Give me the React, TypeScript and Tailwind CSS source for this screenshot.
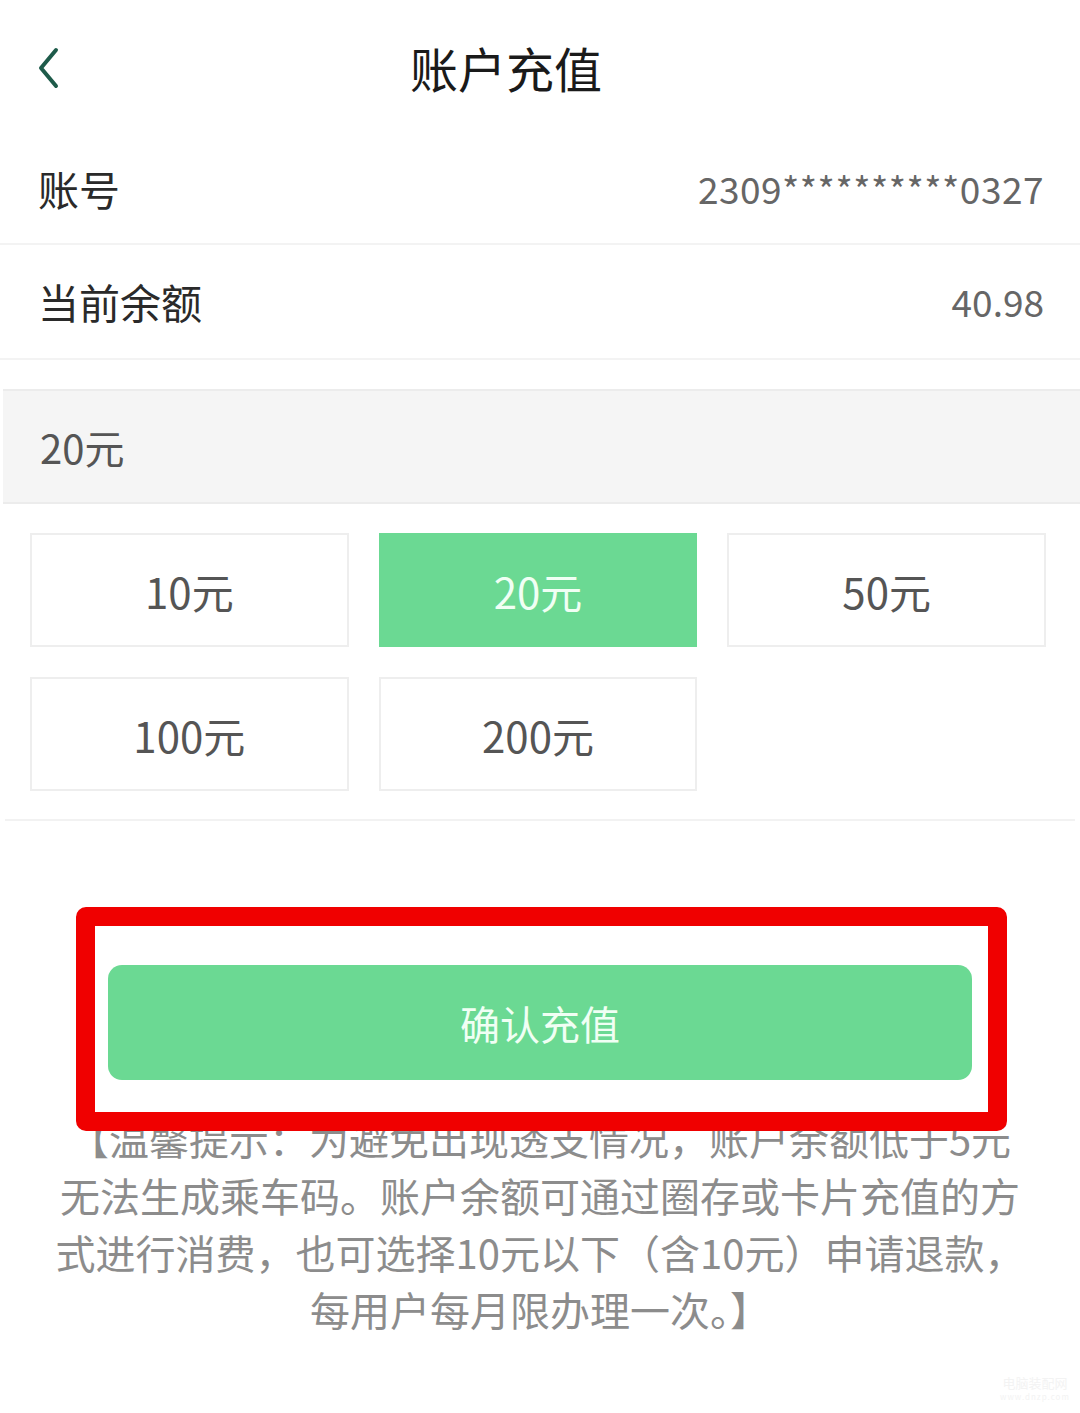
const amounts = ["10元", "20元", "50元", "100元", "200元"];

const tipLines = [
  "【温馨提示：为避免出现透支情况，账户余额低于5元",
  "无法生成乘车码。账户余额可通过圈存或卡片充值的方",
  "式进行消费，也可选择10元以下（含10元）申请退款，",
  "每用户每月限办理一次。】",
];

export default function App() {
  const selected = "20元";

  return (
    <div
      className="relative min-h-[1413px] w-[1080px] bg-white"
      style={{ fontFamily: '"Noto Sans CJK SC", "Noto Sans", sans-serif' }}
    >
      {/* header */}
      <div className="relative flex h-[134px] items-center justify-center pr-[68px]">
        <svg
          className="absolute left-[34px] top-[46px]"
          width="28"
          height="44"
          viewBox="0 0 28 44"
          fill="none"
        >
          <path d="M22 4 L7 22 L22 40" stroke="#1e5b4a" strokeWidth="4" strokeLinecap="round" strokeLinejoin="round" />
        </svg>
        <h1 className="text-[48px] font-normal leading-none text-[#1a1a1a]">账户充值</h1>
      </div>

      {/* account rows */}
      <div className="flex h-[111px] items-center justify-between border-b-2 border-[#f3f3f3] pl-[38px] pr-[36px]">
        <span className="text-[41px] text-[#2a2a2a]">账号</span>
        <span className="text-[37px] tracking-[0.5px] text-[#666666]">2309**********0327</span>
      </div>
      <div className="flex h-[115px] items-center justify-between border-b-2 border-[#f3f3f3] pl-[38px] pr-[36px]">
        <span className="text-[41px] text-[#2a2a2a]">当前余额</span>
        <span className="text-[37px] text-[#666666]">40.98</span>
      </div>

      {/* amount input */}
      <div className="mt-[29px] ml-[3px] flex h-[115px] items-center border-y-2 border-[#ececec] bg-[#f5f5f5] px-[37px]">
        <span className="text-[40px] text-[#555555]">20元</span>
      </div>

      {/* amount grid */}
      <div className="mx-[5px] border-b-2 border-[#f2f2f2] px-[25px] pt-[29px] pb-[28px]">
        <div className="grid grid-cols-3 gap-[30px] pr-[4px]">
          {amounts.map((a) => (
            <div
              key={a}
              className={
                a === selected
                  ? "flex h-[114px] items-center justify-center bg-[#6bd993] text-[42px] text-[#f0fff4]"
                  : "flex h-[114px] items-center justify-center border-2 border-[#eeeeee] bg-white text-[42px] text-[#555555]"
              }
            >
              {a}
            </div>
          ))}
        </div>
      </div>

      {/* confirm */}
      <div className="px-[108px] pt-[144px]">
        <button className="flex h-[115px] w-full items-center justify-center rounded-[14px] bg-[#6bd993] text-[40px] text-[#f0fff4]">
          确认充值
        </button>
      </div>

      <div className="mt-[30px] flex flex-col items-center text-[40px] leading-[57px] text-[#8c8c8c]">
        {tipLines.map((l) => (
          <span key={l} className="whitespace-nowrap">
            {l}
          </span>
        ))}
      </div>

      {/* red annotation box */}
      <div className="absolute left-[76px] top-[907px] h-[224px] w-[931px] rounded-[10px] border-[19px] border-[#f00000]" />

      {/* watermark */}
      <div className="absolute left-[1000px] top-[1376px] flex flex-col items-center leading-none text-[#f3f3f3]">
        <span className="text-[13px]">电脑装配网</span>
        <span className="mt-[4px] text-[8px] tracking-[1px]">www.dnzp.com</span>
      </div>
    </div>
  );
}
